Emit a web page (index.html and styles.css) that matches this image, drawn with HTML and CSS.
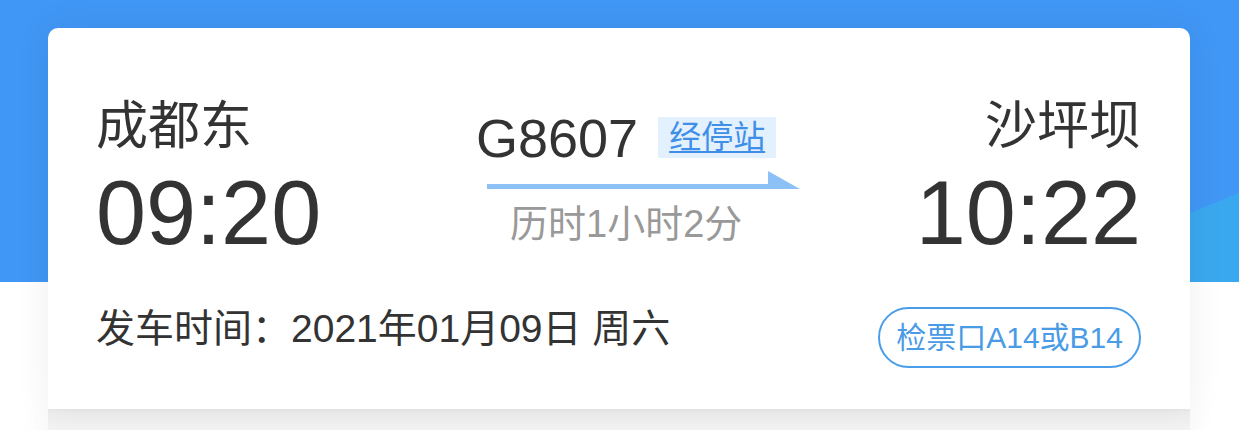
FILE: index.html
```html
<!DOCTYPE html>
<html lang="zh-CN">
<head>
<meta charset="utf-8">
<title>车票</title>
<link rel="stylesheet" href="styles.css">
</head>
<body>
<div class="header"></div>
<main class="wrap">
  <section class="card">
    <div class="route">
      <div class="station-col">
        <div class="station">成都东</div>
        <div class="time">09:20</div>
      </div>
      <div class="mid-col">
        <div class="train-row">
          <span class="train-no">G8607</span>
          <a class="stops">经停站</a>
        </div>
        <svg class="arrow" width="313" height="18" viewBox="0 0 313 18">
          <rect x="0" y="13" width="282" height="5" fill="#8cc1f6"/>
          <polygon points="281,0 313,18 281,18" fill="#8cc1f6"/>
        </svg>
        <div class="duration">历时1小时2分</div>
      </div>
      <div class="station-col right">
        <div class="station">沙坪坝</div>
        <div class="time">10:22</div>
      </div>
    </div>
    <div class="info-row">
      <div class="depart">发车时间：2021年01月09日 周六</div>
      <div class="gate">检票口A14或B14</div>
    </div>
  </section>
  <div class="card-foot"></div>
</main>
</body>
</html>
```

FILE: styles.css
```css
* { box-sizing: border-box; }
html, body { margin: 0; padding: 0; }
body {
  background: #ffffff;
  font-family: "Liberation Sans", "Noto Sans CJK SC", sans-serif;
  color: #333333;
  overflow: hidden;
}
.header {
  height: 282px;
  background-color: #4197f6;
  background-image: linear-gradient(to bottom right, transparent 50%, #3aa8ef 50%);
  background-size: 218px 89px;
  background-position: right bottom;
  background-repeat: no-repeat;
}
.wrap {
  margin-top: -254px;
  padding: 0 49px 0 48px;
}
.card {
  position: relative;
  z-index: 1;
  background: #ffffff;
  border-radius: 10px 10px 0 0;
  height: 381px;
  padding: 71px 49px 0 48px;
  box-shadow: 0 0 36px rgba(0, 0, 0, 0.07);
}
.card-foot {
  height: 40px;
  background: linear-gradient(to bottom, #e9e9e9 0, #efefef 4px, #f4f4f4 22px);
  box-shadow: 0 0 36px rgba(0, 0, 0, 0.05);
}
.route {
  display: grid;
  grid-template-columns: 380px auto 1fr;
}
.station-col { display: flex; flex-direction: column; }
.station-col.right { align-items: flex-end; }
.station {
  font-size: 52px;
  line-height: 52px;
  margin-top: 1px;
}
.time {
  font-size: 90px;
  line-height: 90px;
  margin-top: 16px;
}
.mid-col {
  display: flex;
  flex-direction: column;
  align-items: flex-start;
  padding-top: 12px;
}
.train-row {
  display: flex;
  align-items: flex-start;
}
.train-no {
  font-size: 54px;
  line-height: 54px;
}
.stops {
  margin-left: 20px;
  margin-top: 6px;
  height: 41px;
  padding: 0 11px;
  background: #e3f0fd;
  color: #3f8fe8;
  font-size: 32px;
  line-height: 41px;
  text-decoration: underline;
  text-underline-offset: 3px;
  text-decoration-thickness: 2px;
}
.arrow {
  display: block;
  margin-top: 6px;
  margin-left: 11px;
}
.duration {
  margin-top: 16px;
  margin-left: 34px;
  font-size: 38px;
  line-height: 38px;
  color: #999999;
}
.info-row {
  display: flex;
  justify-content: space-between;
  align-items: flex-start;
  margin-top: 49px;
}
.depart {
  font-size: 39px;
  line-height: 39px;
  margin-top: 2px;
}
.gate {
  height: 61px;
  padding: 0 16px;
  border: 2px solid #4a9ee9;
  border-radius: 31px;
  color: #4a9be6;
  font-size: 30px;
  line-height: 57px;
}
```
